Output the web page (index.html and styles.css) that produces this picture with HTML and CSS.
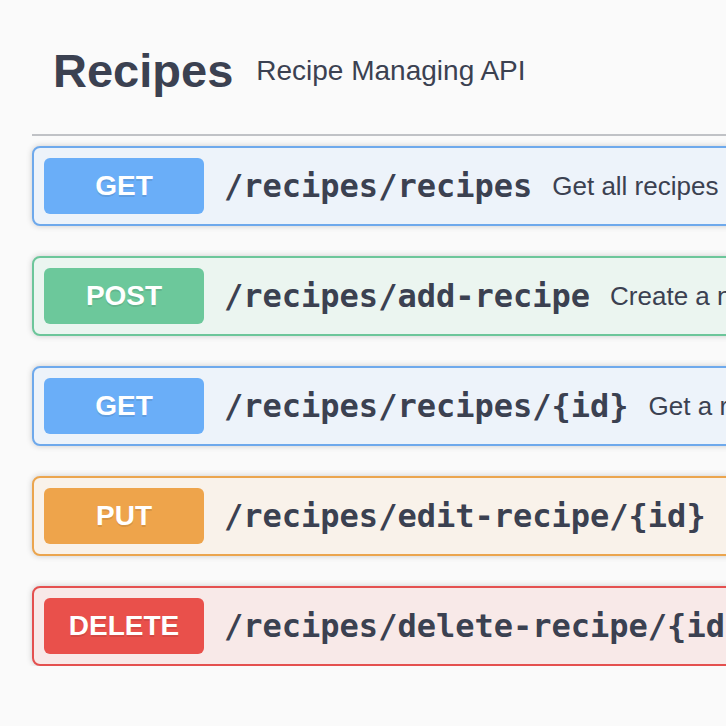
FILE: index.html
```html
<!DOCTYPE html>
<html lang="en">
<head>
<meta charset="utf-8">
<title>Recipes</title>
<link rel="stylesheet" href="styles.css">
</head>
<body>
<div class="wrapper">
  <section class="tag-section">
    <h3 class="tag">
      <span class="tag-name">Recipes</span>
      <small class="tag-desc">Recipe Managing API</small>
    </h3>
    <div class="ops">
      <div class="op op-get">
        <span class="method">GET</span>
        <span class="path">/recipes/recipes</span>
        <span class="summary">Get all recipes</span>
      </div>
      <div class="op op-post">
        <span class="method">POST</span>
        <span class="path">/recipes/add-recipe</span>
        <span class="summary">Create a new recipe</span>
      </div>
      <div class="op op-get">
        <span class="method">GET</span>
        <span class="path">/recipes/recipes/{id}</span>
        <span class="summary">Get a recipe by id</span>
      </div>
      <div class="op op-put">
        <span class="method">PUT</span>
        <span class="path">/recipes/edit-recipe/{id}</span>
        <span class="summary">Edit a recipe</span>
      </div>
      <div class="op op-delete">
        <span class="method">DELETE</span>
        <span class="path">/recipes/delete-recipe/{id}</span>
        <span class="summary">Delete a recipe</span>
      </div>
    </div>
  </section>
</div>
</body>
</html>
```
FILE: styles.css
```css
html, body {
  margin: 0;
  padding: 0;
  overflow: hidden;
  background: #fafafa;
}

body {
  font-family: "Liberation Sans", Arial, Helvetica, sans-serif;
  color: #3b4151;
}

.wrapper {
  padding: 0 0 0 32px;
}

.tag-section {
  width: 1100px;
}

.tag {
  display: flex;
  align-items: center;
  margin: 0 0 10px;
  padding: 44px 40px 36px 21px;
  border-bottom: 2px solid rgba(59, 65, 81, 0.3);
  font-weight: normal;
}

.tag-name {
  font-size: 47px;
  font-weight: bold;
  line-height: 54px;
  color: #3b4151;
}

.tag-desc {
  margin-left: 23px;
  font-size: 28px;
  line-height: 32px;
  color: #3b4151;
}

.ops {
  display: flex;
  flex-direction: column;
  gap: 30px;
}

.op {
  display: flex;
  align-items: center;
  padding: 10px;
  border: 2px solid;
  border-radius: 8px;
  box-shadow: 0 0 6px rgba(0, 0, 0, 0.19);
}

.method {
  flex: 0 0 160px;
  height: 56px;
  display: flex;
  align-items: center;
  justify-content: center;
  border-radius: 6px;
  color: #fff;
  font-size: 28px;
  font-weight: bold;
  text-shadow: 0 2px 0 rgba(0, 0, 0, 0.1);
}

.path {
  padding: 0 20px;
  font-family: "DejaVu Sans Mono", Menlo, monospace;
  font-weight: bold;
  font-size: 32px;
  color: #3b4151;
  white-space: nowrap;
}

.summary {
  font-size: 26px;
  color: #3b4151;
  white-space: nowrap;
}

.op-get { background: #edf3fa; border-color: #6ea9ec; }
.op-get .method { background: #6aaef8; }

.op-post { background: #ebf5f0; border-color: #6cc69a; }
.op-post .method { background: #6cc89b; }

.op-put { background: #f9f2ea; border-color: #eba54e; }
.op-put .method { background: #eea44b; }

.op-delete { background: #f8e9e8; border-color: #e4504f; }
.op-delete .method { background: #e9504b; }
```
